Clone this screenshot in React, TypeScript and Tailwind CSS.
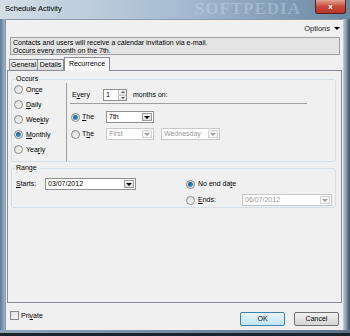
import React from 'react';

function Radio({ checked = false }: { checked?: boolean }) {
  return (
    <span className="w-[9px] h-[9px] shrink-0 rounded-full border border-[#8a8a8a] bg-gradient-to-br from-[#d9d9d9] to-[#fafafa] flex items-center justify-center">
      {checked && <span className="w-[5px] h-[5px] rounded-full bg-gradient-to-br from-[#0d4f80] to-[#4aa7dd]" />}
    </span>
  );
}

function Arrow({ disabled = false }: { disabled?: boolean }) {
  return (
    <span
      className={`w-0 h-0 border-l-[3px] border-r-[3px] border-t-[3px] border-l-transparent border-r-transparent ${
        disabled ? 'border-t-[#a0a0a0]' : 'border-t-black'
      }`}
    />
  );
}

function Combo({ value, w, disabled = false }: { value: string; w: string; disabled?: boolean }) {
  return (
    <div className={`${w} h-[12px] flex border ${disabled ? 'border-[#c9c9c9]' : 'border-[#8e8f8f]'} bg-white`}>
      <span className={`flex-1 pl-[2px] leading-[10px] ${disabled ? 'text-[#9a9a9a]' : 'text-black'}`}>{value}</span>
      <span
        className={`w-[10px] m-[1px] flex items-center justify-center border ${
          disabled ? 'border-[#d4d4d4] bg-[#f4f4f4]' : 'border-[#9c9c9c] bg-gradient-to-b from-[#f6f6f6] to-[#dcdcdc]'
        }`}
      >
        <Arrow disabled={disabled} />
      </span>
    </div>
  );
}

function OccursItem({ label, checked = false }: { label: React.ReactNode; checked?: boolean }) {
  return (
    <div className="h-[15px] flex items-center gap-[3px] pl-[2px]">
      <Radio checked={checked} />
      <span>{label}</span>
    </div>
  );
}

export default function App() {
  return (
    <div className="w-[350px] h-[336px] overflow-hidden bg-[#1d2833] font-['Liberation_Sans',Arial,sans-serif] text-[7px] leading-[8px] text-black">
      {/* title bar */}
      <div className="h-[19px] flex items-start bg-gradient-to-r from-[#d3dde6] via-[#a7bdd2] to-[#6a87a3]">
        <span className="pl-[5px] pt-[5px] text-[7.5px] text-black">Schedule Activity</span>
        <div className="flex-1 flex justify-end pr-[14px]">
          <span className="font-['Liberation_Serif',serif] font-bold text-[17px] leading-[17px] tracking-[1px] text-[#dbe6f0] opacity-30">SOFTPEDIA</span>
        </div>
        <div className="w-[31px] h-[14px] mr-[4px] rounded-b-[3px] border border-t-0 border-[#5c1e1e] bg-gradient-to-b from-[#e3a394] via-[#c54a3a] to-[#b8362a] flex items-center justify-center text-white font-bold text-[8px]">
          x
        </div>
      </div>

      {/* body */}
      <div className="h-[311px] flex">
        <div className="w-[5px] bg-gradient-to-r from-[#5d7894] to-[#9fb4c8]" />
        <div className="w-[338px] bg-[#f0f0f0] flex flex-col border-t border-l border-[#8b9aa9]">
          <div className="h-[17px] flex justify-end items-center pr-[3px] gap-[4px]">
            <span className="text-[7.5px] text-[#1a1a1a]">Options</span>
            <Arrow />
          </div>
          <div className="ml-[4px] mr-[3px] h-[18px] border border-[#a0a0a0] bg-[#e4e4e4] px-[2px] pt-[1px] leading-[8px]">
            <div>Contacts and users will receive a calendar invitation via e-mail.</div>
            <div>Occurs every month on the 7th.</div>
          </div>

          {/* tabs */}
          <div className="mt-[2px] h-[13px] ml-[3px] flex items-end">
            <div className="w-[29px] h-[11px] border border-b-0 border-[#898c95] bg-gradient-to-b from-[#f2f2f2] to-[#dadada] flex items-center justify-center">General</div>
            <div className="w-[26px] h-[11px] border border-b-0 border-l-0 border-[#898c95] bg-gradient-to-b from-[#f2f2f2] to-[#dadada] flex items-center justify-center">Details</div>
            <div className="relative z-10 -mb-[1px] w-[46px] h-[14px] border border-b-0 border-[#898c95] bg-[#fcfcfc] flex items-center justify-center pb-[1px]">Recurrence</div>
          </div>
          <div className="ml-[1px] mr-[1px] h-[233px] border border-[#898c95] bg-[#f0f0f0]">
            <fieldset className="ml-[3px] mr-[5px] mt-[4px] h-[87px] border border-[#d5dfe5] rounded-[3px]">
              <legend className="ml-[3px] px-[1px] leading-[8px]">Occurs</legend>
              <div className="flex h-[79px]">
                <div className="w-[54px] flex flex-col -mt-[1px]">
                  <OccursItem label={<>On<u>c</u>e</>} />
                  <OccursItem label={<><u>D</u>aily</>} />
                  <OccursItem label={<>Wee<u>k</u>ly</>} />
                  <OccursItem label={<><u>M</u>onthly</>} checked />
                  <OccursItem label={<>Yea<u>r</u>ly</>} />
                </div>
                <div className="border-l border-[#a0a0a0] mb-[1px]" />
                <div className="pl-[3px] flex flex-col">
                  <div className="mt-[6px] h-[12px] flex items-center">
                    <span className="ml-[2px] w-[31px]">E<u>v</u>ery</span>
                    <div className="w-[24px] h-[12px] flex border border-[#8e8f8f] bg-white">
                      <span className="flex-1 pl-[2px] leading-[10px]">1</span>
                      <div className="w-[8px] flex flex-col border-l border-[#c6c6c6]">
                        <span className="flex-1 flex items-center justify-center bg-gradient-to-b from-[#f6f6f6] to-[#e0e0e0] border-b border-[#c6c6c6]">
                          <span className="w-0 h-0 border-l-[2px] border-r-[2px] border-b-[2px] border-l-transparent border-r-transparent border-b-[#555]" />
                        </span>
                        <span className="flex-1 flex items-center justify-center bg-gradient-to-b from-[#f6f6f6] to-[#e0e0e0]">
                          <span className="w-0 h-0 border-l-[2px] border-r-[2px] border-t-[2px] border-l-transparent border-r-transparent border-t-[#555]" />
                        </span>
                      </div>
                    </div>
                    <span className="ml-[6px]">months on:</span>
                  </div>
                  <div className="mt-[2px] w-[237px] border-t border-[#a0a0a0] h-0" />
                  <div className="mt-[7px] h-[12px] flex items-center">
                    <div className="w-[36px] flex items-center gap-[2px] pl-[1px]">
                      <Radio checked />
                      <span><u>T</u>he</span>
                    </div>
                    <Combo value="7th" w="w-[48px]" />
                  </div>
                  <div className="mt-[5px] h-[12px] flex items-center">
                    <div className="w-[36px] flex items-center gap-[2px] pl-[1px]">
                      <Radio />
                      <span>T<u>h</u>e</span>
                    </div>
                    <Combo value="First" w="w-[48px]" disabled />
                    <div className="ml-[7px]">
                      <Combo value="Wednesday" w="w-[59px]" disabled />
                    </div>
                  </div>
                </div>
              </div>
            </fieldset>

            <fieldset className="ml-[3px] mr-[5px] mt-[2px] h-[44px] border border-[#d5dfe5] rounded-[3px]">
              <legend className="ml-[3px] px-[1px] leading-[8px]">Range</legend>
              <div className="flex pt-[5px]">
                <div className="w-[174px] pl-[4px] h-[14px] flex items-center">
                  <span className="w-[29px]"><u>S</u>tarts:</span>
                  <Combo value="03/07/2012" w="w-[91px]" />
                </div>
                <div className="flex flex-col gap-[2px]">
                  <div className="h-[14px] flex items-center gap-[3px]">
                    <Radio checked />
                    <span>No end da<u>t</u>e</span>
                  </div>
                  <div className="h-[14px] flex items-center">
                    <div className="w-[56px] flex items-center gap-[3px]">
                      <Radio />
                      <span><u>E</u>nds:</span>
                    </div>
                    <Combo value="06/07/2012" w="w-[90px]" disabled />
                  </div>
                </div>
              </div>
            </fieldset>
          </div>

          {/* bottom */}
          <div className="flex-1 flex items-start pl-[4px] pr-[4px]">
            <div className="mt-[8px] flex items-center gap-[2px]">
              <span className="w-[9px] h-[9px] border border-[#8a8a8a] bg-gradient-to-br from-[#dcdcdc] to-[#fafafa]" />
              <span>Pri<u>v</u>ate</span>
            </div>
            <div className="flex-1" />
            <div className="mt-[9px] w-[45px] h-[14px] rounded-[2px] border border-[#3c7fb1] bg-gradient-to-b from-[#eaf6fd] to-[#bee6fd] flex items-center justify-center">OK</div>
            <div className="ml-[9px] mt-[9px] w-[45px] h-[14px] rounded-[2px] border border-[#707070] bg-gradient-to-b from-[#f2f2f2] to-[#d4d4d4] flex items-center justify-center">Cancel</div>
          </div>
        </div>
        <div className="w-[7px] bg-gradient-to-r from-[#c7d2dc] via-[#7d93a8] to-[#3c4f60]" />
      </div>
      <div className="h-[3px] bg-gradient-to-r from-[#8ea5bb] to-[#5d7288]" />
      <div className="h-[3px] bg-[#1b242d]" />
    </div>
  );
}
